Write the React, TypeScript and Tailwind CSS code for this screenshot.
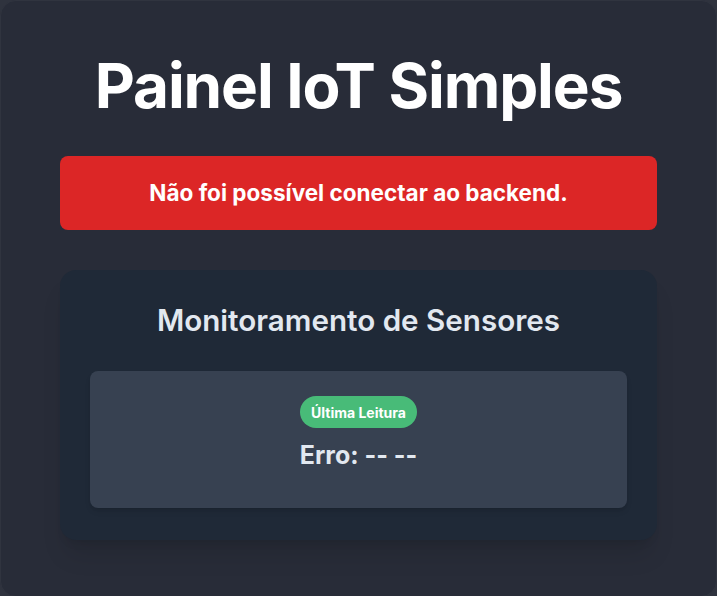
export default function App() {
    return (
        <div className="min-h-[596px] bg-[#2f333e]" style={{ fontFamily: 'Inter, "Noto Sans", sans-serif' }}>
            <div className="min-h-[596px] rounded-2xl border border-[#30343f] bg-[#282c38] px-[59px] pt-[51px] pb-[56px]">
                <h1 className="text-center text-[62px] leading-[68px] font-bold text-white tracking-[-1.1px]">
                    Painel IoT Simples
                </h1>

                {/* Error banner */}
                <div className="mt-[36px] h-[74px] rounded-lg bg-[#dc2626] flex items-center justify-center">
                    <p className="text-[22.5px] font-bold text-white">Não foi possível conectar ao backend.</p>
                </div>

                {/* Sensor card */}
                <div className="mt-[40px] rounded-2xl bg-[#1f2937] px-[30px] pt-[30px] pb-[32px] shadow-xl">
                    <h2 className="text-center text-[29.6px] leading-[40px] font-semibold text-[#e2e8f0]">
                        Monitoramento de Sensores
                    </h2>
                    <div className="mt-[31px] h-[137px] rounded-lg bg-[#374151] pt-[25px] flex flex-col items-center shadow-md">
                        <span className="h-[32px] px-[11px] rounded-full bg-[#48bb78] text-white text-[14px] font-bold flex items-center">
                            Última Leitura
                        </span>
                        <p className="mt-[11px] text-[25px] leading-[32px] font-bold text-[#e2e8f0]">Erro: -- --</p>
                    </div>
                </div>
            </div>
        </div>
    );
}
